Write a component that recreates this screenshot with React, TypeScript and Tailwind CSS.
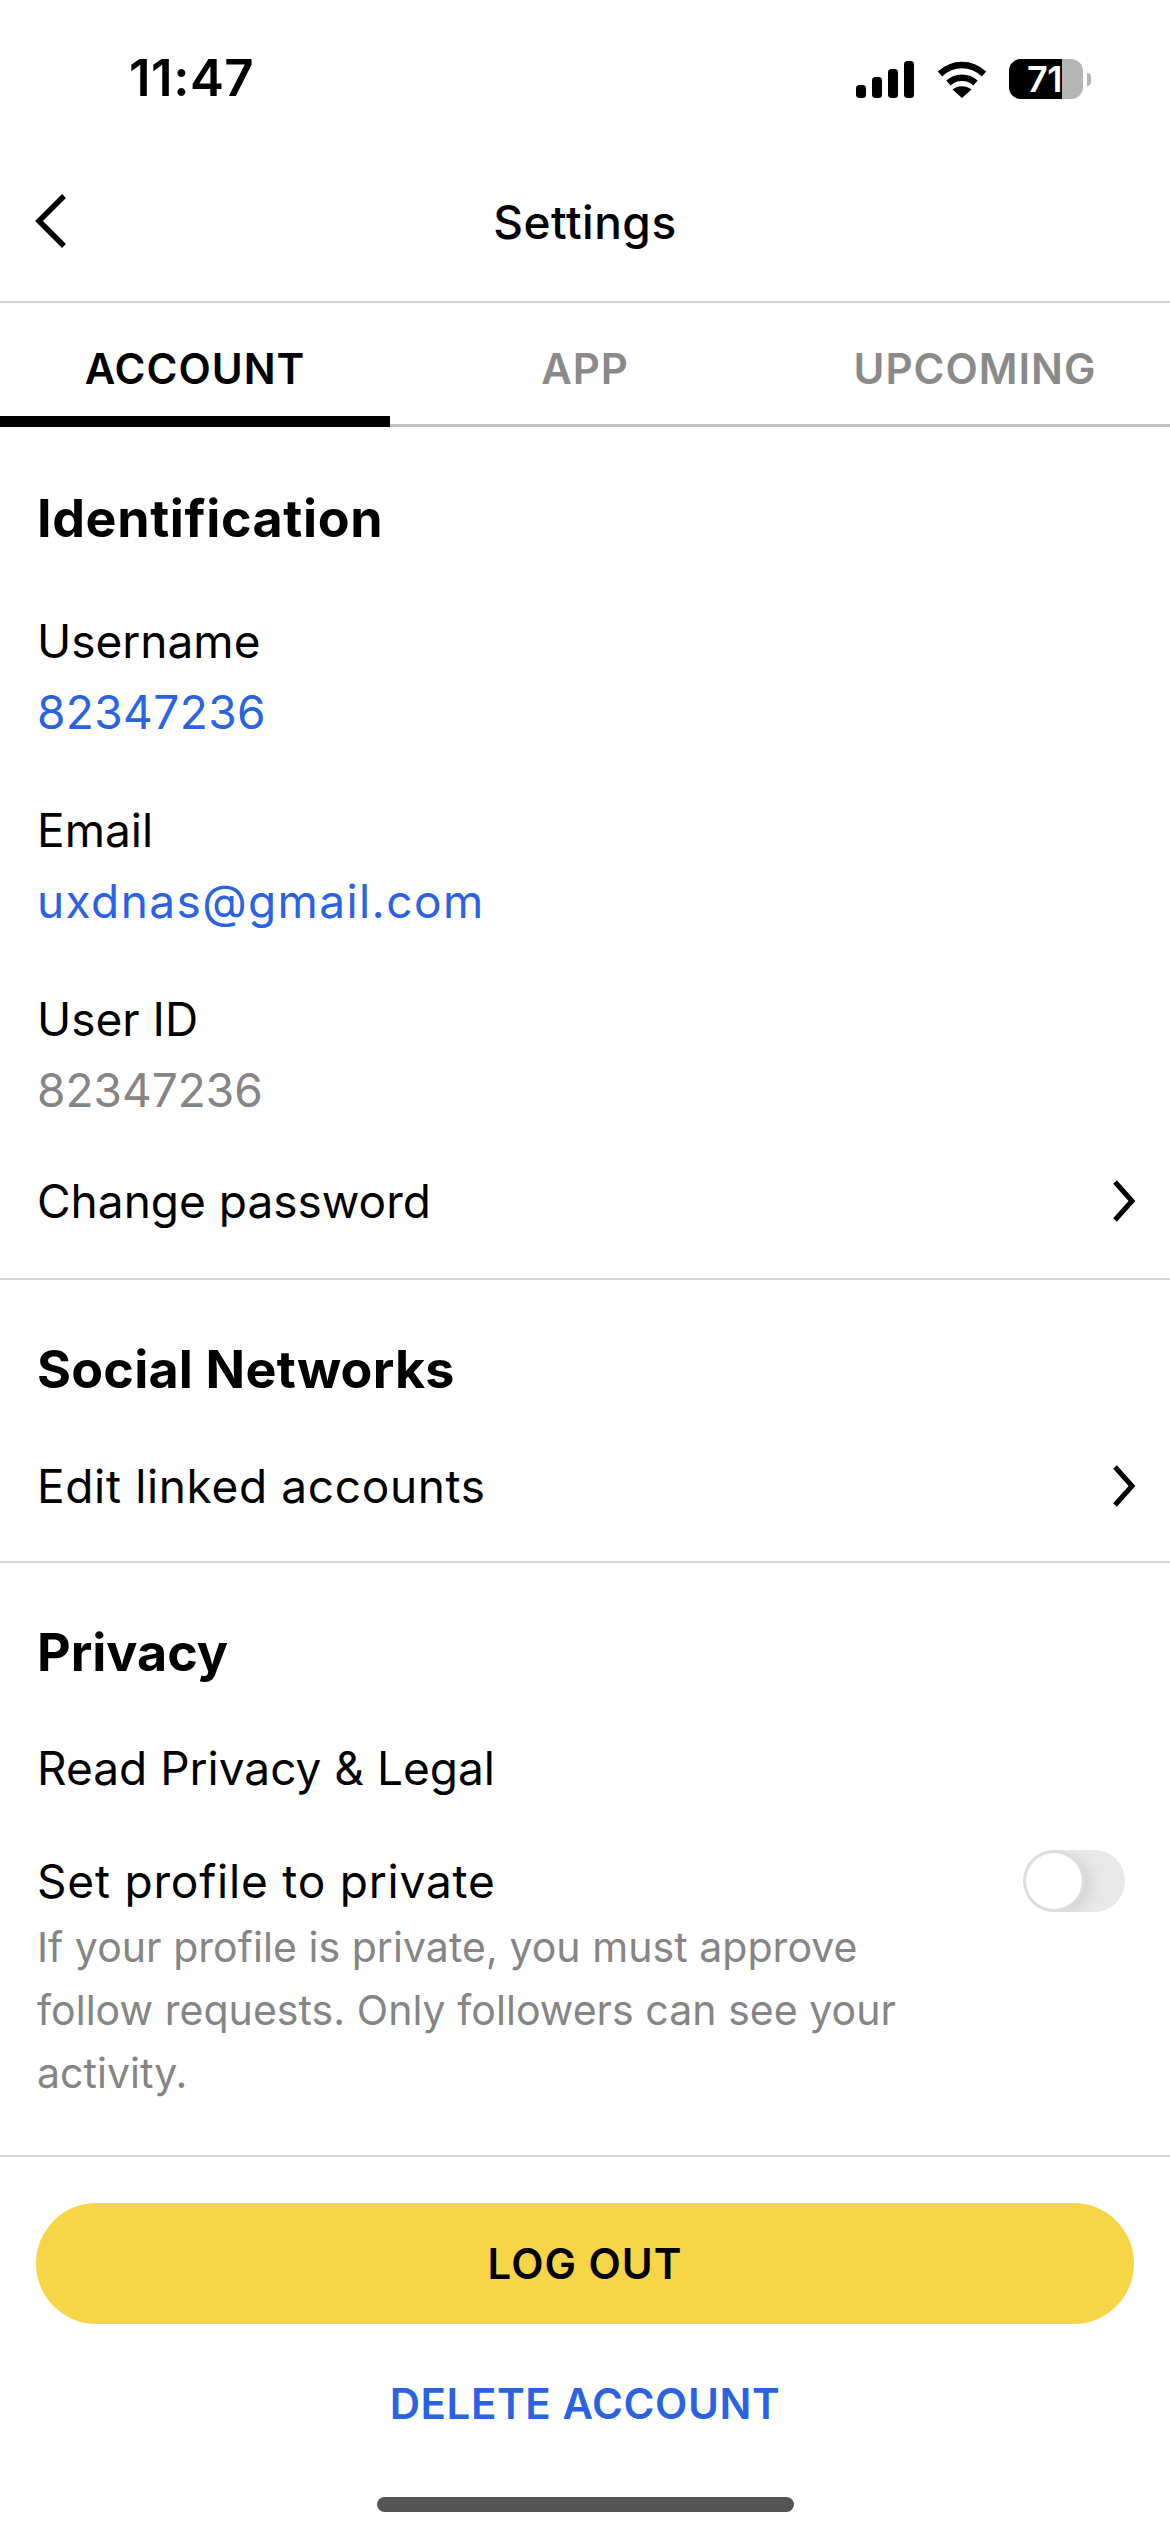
const font = "font-['Inter',sans-serif]"

function StatusIcons() {
  return (
    <div className="flex items-center">
      <svg width="58" height="37" viewBox="0 0 58 37" fill="black">
        <rect x="0" y="24" width="10" height="13" rx="3.5" />
        <rect x="16" y="16" width="10" height="21" rx="3.5" />
        <rect x="32" y="8" width="10" height="29" rx="3.5" />
        <rect x="48" y="0" width="10" height="37" rx="3.5" />
      </svg>
      <svg width="50" height="37" viewBox="0 0 50 37" fill="none" stroke="black" strokeWidth="6.5" className="ml-[23px]">
        <path d="M3 13 C16 1 34 1 47 13" />
        <path d="M11.5 22 C19 15 31 15 38.5 22" />
        <path d="M25 37 L15.5 28.5 C21 24 29 24 34.5 28.5 Z" fill="black" stroke="none" />
      </svg>
      <div className="ml-[22px] flex items-center">
        <div className="flex w-[74px] h-[40px] rounded-[12px] bg-[#b5b5b5]">
          <div className="flex items-center justify-end w-[53px] h-full rounded-l-[12px] bg-black">
            <span className="text-[36px] leading-[36px] tracking-[-0.5px] font-semibold text-white">71</span>
          </div>
        </div>
        <div className="w-[4px] h-[13px] rounded-r-full bg-[#b5b5b5] ml-[4px]" />
      </div>
    </div>
  )
}

function Field({ label, value, valueClass }: { label: string; value: string; valueClass: string }) {
  return (
    <div className="flex flex-col">
      <div className="text-[46px] leading-[71px] text-black">{label}</div>
      <div className={`text-[46px] leading-[71px] ${valueClass}`}>{value}</div>
    </div>
  )
}

function LinkRow({ label, labelClass = "" }: { label: string; labelClass?: string }) {
  return (
    <div className="flex items-center justify-between pr-[34px] h-[76px]">
      <span className={`text-[46px] text-black ${labelClass}`}>{label}</span>
      <svg width="24" height="42" viewBox="0 0 24 42" fill="none" stroke="black" strokeWidth="5">
        <path d="M3 2 L20 21 L3 40" />
      </svg>
    </div>
  )
}

export default function App() {
  return (
    <div className={`${font} w-[1170px] h-[2532px] bg-white flex flex-col relative overflow-hidden`}>
      {/* status bar */}
      <div className="h-[122px] flex items-start justify-between pl-[129px] pr-[79px] pt-[50px]">
        <span className="text-[51px] leading-[56px] font-semibold tracking-[0.5px] text-black">11:47</span>
        <div className="pt-[9px]">
          <StatusIcons />
        </div>
      </div>

      {/* nav bar */}
      <div className="relative h-[181px] flex items-center justify-center border-b-[2px] border-[#cfcfcf] pt-[22px]">
        <svg width="34" height="54" viewBox="0 0 34 54" fill="none" stroke="black" strokeWidth="5.5" className="absolute left-[35px] top-[72px]">
          <path d="M29 2 L4 27 L29 52" />
        </svg>
        <span className="text-[46px] font-medium tracking-[0.5px] text-black">Settings</span>
      </div>

      {/* tabs */}
      <div className="flex h-[124px] border-b-[3px] border-[#c4c4c4]">
        <div className="relative flex-1 flex items-center justify-center pt-[10px] text-[42px] font-semibold tracking-[1px] text-black">
          ACCOUNT
          <div className="absolute left-0 right-0 bottom-[-3px] h-[11px] bg-black" />
        </div>
        <div className="flex-1 flex items-center justify-center pt-[10px] text-[42px] font-semibold tracking-[1px] text-[#8a8a8a]">APP</div>
        <div className="flex-1 flex items-center justify-center pt-[10px] text-[42px] font-semibold tracking-[1px] text-[#8a8a8a]">UPCOMING</div>
      </div>

      {/* identification */}
      <div className="pl-[37px] border-b-[2px] border-[#d4d4d4] h-[853px]">
        <h2 className="text-[52px] font-bold tracking-[0.6px] text-black mt-[56px] leading-[72px]">Identification</h2>
        <div className="mt-[51px] flex flex-col gap-[47px]">
          <Field label="Username" value="82347236" valueClass="text-[#2b62e3] tracking-[0.4px]" />
          <Field label="Email" value="uxdnas@gmail.com" valueClass="text-[#2b62e3] tracking-[1.4px]" />
          <Field label="User ID" value="82347236" valueClass="text-[#858585]" />
        </div>
        <div className="mt-[37px]">
          <LinkRow label="Change password" />
        </div>
      </div>

      {/* social */}
      <div className="pl-[37px] border-b-[2px] border-[#d4d4d4] h-[283px]">
        <h2 className="text-[52px] font-bold tracking-[0.2px] text-black mt-[54px] leading-[72px]">Social Networks</h2>
        <div className="mt-[42px]">
          <LinkRow label="Edit linked accounts" labelClass="tracking-[0.65px]" />
        </div>
      </div>

      {/* privacy */}
      <div className="pl-[37px] border-b-[2px] border-[#d4d4d4] h-[594px]">
        <h2 className="text-[52px] font-bold text-black mt-[54px] leading-[72px]">Privacy</h2>
        <div className="mt-[43px] text-[46px] leading-[72px] text-black">Read Privacy &amp; Legal</div>
        <div className="mt-[41px] flex items-center justify-between pr-[45px]">
          <span className="text-[46px] leading-[72px] tracking-[0.8px] text-black">Set profile to private</span>
          <div className="relative w-[102px] h-[62px] rounded-full bg-[#e8e8e8] overflow-hidden">
            <div className="absolute left-[3px] top-[3px] w-[56px] h-[56px] rounded-full bg-white shadow-[0_0_0_3px_#dcdcdc,8px_3px_14px_rgba(0,0,0,0.10)]" />
          </div>
        </div>
        <p className="text-[41px] leading-[63px] tracking-[0.05px] text-[#858585] w-[900px] mt-[-1px]">
          If your profile is private, you must approve follow requests. Only followers can see your activity.
        </p>
      </div>

      {/* actions */}
      <div className="px-[36px] pt-[46px] flex flex-col items-center">
        <div className="w-full h-[121px] rounded-full bg-[#f6d646] flex items-center justify-center text-[42px] font-semibold tracking-[1px] text-black">
          LOG OUT
        </div>
        <div className="mt-[50px] text-[42px] leading-[60px] font-semibold tracking-[0.6px] text-[#2b62e3]">DELETE ACCOUNT</div>
      </div>

      <div className="absolute left-[377px] top-[2497px] w-[417px] h-[15px] rounded-full bg-[#555555]" />
    </div>
  )
}
